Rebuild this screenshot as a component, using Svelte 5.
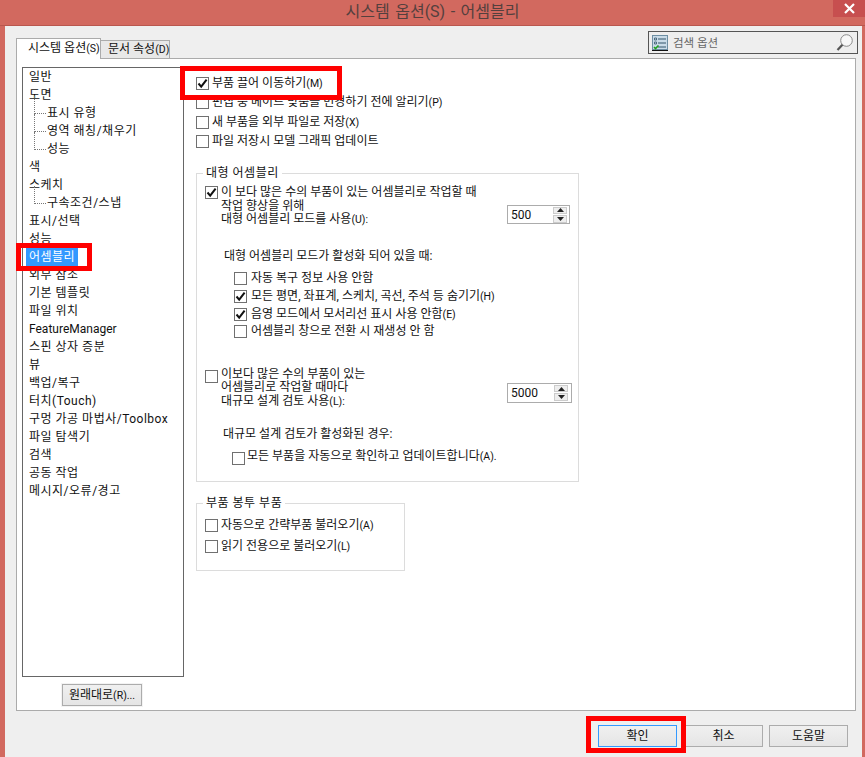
<script>
  const tree = [
    { t: '일반', l: 0 }, { t: '도면', l: 0 }, { t: '표시 유형', l: 1 }, { t: '영역 해칭/채우기', l: 1 }, { t: '성능', l: 1, end: true },
    { t: '색', l: 0 }, { t: '스케치', l: 0 }, { t: '구속조건/스냅', l: 1, end: true }, { t: '표시/선택', l: 0 }, { t: '성능', l: 0 },
    { t: '어셈블리', l: 0, sel: true }, { t: '외부 참조', l: 0 }, { t: '기본 템플릿', l: 0 }, { t: '파일 위치', l: 0 }, { t: 'FeatureManager', l: 0, lat: true },
    { t: '스핀 상자 증분', l: 0 }, { t: '뷰', l: 0 }, { t: '백업/복구', l: 0 }, { t: '터치(Touch)', l: 0 }, { t: '구멍 가공 마법사/Toolbox', l: 0 },
    { t: '파일 탐색기', l: 0 }, { t: '검색', l: 0 }, { t: '공동 작업', l: 0 }, { t: '메시지/오류/경고', l: 0 }
  ];
  const top = [
    { t: '부품 끌어 이동하기', k: '(M)', c: true },
    { t: '편집 중 메이트 맞춤을 변경하기 전에 알리기', k: '(P)' },
    { t: '새 부품을 외부 파일로 저장', k: '(X)' },
    { t: '파일 저장시 모델 그래픽 업데이트', k: '' }
  ];
  const large = [
    { t: '자동 복구 정보 사용 안함', k: '' },
    { t: '모든 평면, 좌표계, 스케치, 곡선, 주석 등 숨기기', k: '(H)', c: true },
    { t: '음영 모드에서 모서리선 표시 사용 안함', k: '(E)', c: true },
    { t: '어셈블리 창으로 전환 시 재생성 안 함', k: '' }
  ];
</script>

{#snippet box(c)}
  <span class="box">
    {#if c}
      <svg width="11" height="11" viewBox="0 0 11 11"><path d="M1.5 5.5 L4.2 8.6 L9.6 1.6" fill="none" stroke="#111" stroke-width="2"/></svg>
    {/if}
  </span>
{/snippet}

{#snippet spin(v, cls)}
  <div class="spin {cls}">
    <span class="val">{v}</span>
    <span class="arrows">
      <span class="ab"><svg width="7" height="4" viewBox="0 0 7 4"><path d="M3.5 0 L7 4 L0 4 Z" fill="#222"/></svg></span>
      <span class="ab"><svg width="7" height="4" viewBox="0 0 7 4"><path d="M0 0 L7 0 L3.5 4 Z" fill="#222"/></svg></span>
    </span>
  </div>
{/snippet}

<div class="win">
  <header class="title">
    <span class="ttext">시스템 옵션(S) - 어셈블리</span>
    <span class="close"><svg width="11" height="11" viewBox="0 0 11 11"><path d="M1 1 L10 10 M10 1 L1 10" stroke="#fff" stroke-width="2.2"/></svg></span>
  </header>
  <div class="dialog">
    <div class="tabbar">
      <div class="tabs">
        <div class="tab active">시스템 옵션<span class="ak">(S)</span></div>
        <div class="tab">문서 속성<span class="ak">(D)</span></div>
      </div>
      <div class="search">
        <svg class="sicon" width="16" height="16" viewBox="0 0 16 16">
          <rect x="0.5" y="0.5" width="15" height="14" fill="#c9dbe8" stroke="#6d8ea3"/>
          <rect x="0" y="15" width="16" height="1" fill="#111"/>
          <path d="M2.5 3h2v2h-2zM2.5 7h2v2h-2z" fill="none" stroke="#33546a" stroke-width="0.8"/>
          <path d="M6 4h8M6 8h8M6 12h8" stroke="#33546a"/>
          <path d="M2 12l1.5 1.5L6.5 10.5" fill="none" stroke="#1da11d" stroke-width="1.6"/>
        </svg>
        <span class="stext">검색 옵션</span>
        <svg class="glass" width="17" height="18" viewBox="0 0 17 18">
          <circle cx="10.5" cy="6.5" r="5.8" fill="#f8f8f8" stroke="#8a8a8a"/>
          <path d="M6.4 10.8 L1.5 16" stroke="#555" stroke-width="2.2"/>
        </svg>
      </div>
    </div>
    <div class="panel">
      <div class="left">
        <div class="tree">
          {#each tree as it}
            <div class="node" class:sub={it.l === 1}>
              {#if it.l === 1}<span class="dots" class:end={it.end}></span>{/if}
              <span class="ntext" class:sel={it.sel} class:lat={it.lat}>{it.t}</span>
            </div>
          {/each}
        </div>
        <button class="btn reset">원래대로<span class="ak">(R)...</span></button>
      </div>
      <div class="main">
        <div class="toplist">
          {#each top as r}
            <div class="row">{@render box(r.c)}<span>{r.t}<span class="ak">{r.k}</span></span></div>
          {/each}
        </div>

        <fieldset class="group big">
          <legend>대형 어셈블리</legend>
          <div class="opt">
            {@render box(true)}
            <div class="lines">
              <div>이 보다 많은 수의 부품이 있는 어셈블리로 작업할 때</div>
              <div>작업 향상을 위해</div>
              <div>대형 어셈블리 모드를 사용<span class="ak">(U):</span></div>
            </div>
            {@render spin('500', 'sp1')}
          </div>
          <div class="cap">대형 어셈블리 모드가 활성화 되어 있을 때:</div>
          <div class="sublist">
            {#each large as r}
              <div class="row sr">{@render box(r.c)}<span>{r.t}<span class="ak">{r.k}</span></span></div>
            {/each}
          </div>
          <div class="opt second">
            {@render box(false)}
            <div class="lines">
              <div>이보다 많은 수의 부품이 있는</div>
              <div>어셈블리로 작업할 때마다</div>
              <div>대규모 설계 검토 사용<span class="ak">(L):</span></div>
            </div>
            {@render spin('5000', 'sp2')}
          </div>
          <div class="cap cap2">대규모 설계 검토가 활성화된 경우:</div>
          <div class="row last">{@render box(false)}<span class="up">모든 부품을 자동으로 확인하고 업데이트합니다<span class="ak">(A).</span></span></div>
        </fieldset>

        <fieldset class="group small">
          <legend>부품 봉투 부품</legend>
          <div class="row s1">{@render box(false)}<span>자동으로 간략부품 불러오기<span class="ak">(A)</span></span></div>
          <div class="row s2">{@render box(false)}<span>읽기 전용으로 불러오기<span class="ak">(L)</span></span></div>
        </fieldset>
      </div>
    </div>
    <div class="footer">
      <button class="btn ok">확인</button>
      <button class="btn">취소</button>
      <button class="btn">도움말</button>
    </div>
  </div>
  <span class="mark m1"></span>
  <span class="mark m2"></span>
  <span class="mark m3"></span>
</div>

<style>
  :global(body) { margin: 0; background: #d2695f; }
  .win {
    position: relative; width: 865px; height: 757px; overflow: hidden; background: #d2695f;
    display: flex; flex-direction: column;
    font: 12px/14px Roboto, "Noto Sans CJK KR", sans-serif; color: #111;
  }
  .title {
    height: 26px; flex: none; box-sizing: border-box; display: flex; justify-content: center; align-items: center;
    position: relative; border-bottom: 1px solid #b9574e;
  }
  .ttext { font-size: 16px; color: #54403e; word-spacing: 1.5px; line-height: 22px; margin-top: -2px; }
  .close {
    position: absolute; left: 833px; top: 0; width: 32px; height: 17px; background: #c74f4f;
    display: flex; align-items: center; justify-content: center;
  }
  .dialog { flex: 1; margin: 0 3px 0 5px; background: #efefef; display: flex; flex-direction: column; padding: 0 6px 0 11px; min-height: 0; }
  .tabbar { height: 32px; flex: none; display: flex; justify-content: space-between; align-items: flex-end; }
  .tabs { display: flex; align-items: flex-end; }
  .tab {
    box-sizing: border-box; height: 18px; padding: 0 0 0 7px; width: 69px; border: 1px solid #ababab; border-bottom: 0; border-left: 0;
    background: #e8e8e8; white-space: nowrap; line-height: 17px;
  }
  .tab.active { height: 21px; width: 85px; background: #fff; border-left: 1px solid #ababab; padding-left: 11px; position: relative; top: 1px; z-index: 1; line-height: 18px; }
  .search {
    box-sizing: border-box; width: 210px; height: 23px; margin: 0 -2px 4px 0; border: 1px solid #555; background: #eee;
    display: flex; align-items: center; padding: 0 4px 0 3px; gap: 5px;
  }
  .stext { color: #666; font-size: 11.5px; flex: 1; }
  .panel { height: 653px; box-sizing: border-box; flex: none; background: #fff; border: 1px solid #ababab; display: flex; padding: 8px 0 0 5px; }
  .left { width: 162px; flex: none; display: flex; flex-direction: column; }
  .tree { box-sizing: border-box; width: 162px; height: 610px; border: 1px solid #666; padding: 0 0 0 6px; flex: none; letter-spacing: 0.5px; }
  .node { height: 18px; line-height: 18px; white-space: nowrap; display: flex; align-items: center; position: relative; }
  .node.sub { padding-left: 18px; }
  .dots { position: absolute; left: 5px; top: -8px; bottom: -8px; width: 12px; border-left: 1px dotted #777; }
  .dots::after { content: ""; position: absolute; left: 0; top: 17px; width: 11px; border-top: 1px dotted #777; }
  .dots.end { bottom: 8px; }
  .ntext { position: relative; }
  .ntext.lat { letter-spacing: 0; }
  .ntext.sel { background: #3399ff; color: #fff; padding: 0 3px; margin-left: -3px; }
  .btn {
    box-sizing: border-box; width: 80px; height: 22px; font: inherit; color: #111; padding: 0;
    border: 1px solid #acacac; background: linear-gradient(#f0f0f0, #e5e5e5);
  }
  .reset { margin: 7px 0 0 40px; outline: 1px solid #f3f3f3; }
  .main { flex: 1; padding-left: 12px; min-width: 0; }
  .toplist { padding: 6.5px 0 0 0; display: flex; flex-direction: column; }
  .row { display: flex; align-items: center; white-space: nowrap; }
  .toplist .row { height: 19.5px; gap: 3px; }
  .box {
    box-sizing: border-box; flex: none; width: 13px; height: 13px; border: 1px solid #707070; background: #fff;
    display: inline-flex; align-items: center; justify-content: center;
  }
  .ak { font-size: 10.5px; }
  fieldset.group { margin: 0; padding: 0; border: 1px solid #dcdcdc; box-sizing: border-box; position: relative; min-width: 0; }
  legend { margin-left: -2px; padding: 0 3px; line-height: 14px; font-size: 12px; letter-spacing: 0.5px; }
  .big { width: 383px; height: 316px; margin-top: 14.5px !important; padding: 0 0 0 8px !important; }
  .opt { display: flex; position: relative; gap: 3px; height: 39px; margin-top: 4px; }
  .lines { line-height: 13.5px; white-space: nowrap; flex: 1; padding-top: 2px; }
  .second .lines { padding-top: 0; }
  .opt > :global(.box) { margin-top: 2px; }
  .spin {
    box-sizing: border-box; position: absolute; left: 302px; top: 21px; width: 63px; height: 19px; border: 1px solid #acacac; background: #fff;
    display: flex; align-items: center; justify-content: space-between; padding: 0 2px 0 3px;
  }
  .spin.sp2 { top: 15px; width: 65px; height: 20px; padding-right: 3px; }
  .arrows { display: flex; flex-direction: column; gap: 1px; }
  .ab { width: 14px; height: 7.5px; background: #eee; border: 1px solid #ccc; box-sizing: border-box; display: flex; align-items: center; justify-content: center; }
  .cap { margin: 26px 0 0 19px; height: 14px; white-space: nowrap; }
  .sublist { margin: 7px 0 0 29px; }
  .sr { height: 17.7px; gap: 4px; }
  .second { margin-top: 27px; }
  .cap2 { margin: 20px 0 0 18px; }
  .last { margin: 9px 0 0 27px; gap: 2px; height: 18px; }
  .up { margin-bottom: 4px; }
  .small { width: 209px; height: 75px; margin-top: 14px !important; padding: 0 0 0 8px !important; }
  .s1 { margin-top: 4.6px; height: 21px; gap: 3px; }
  .s2 { height: 21px; gap: 3px; }
  .footer { display: flex; justify-content: flex-end; gap: 6px; margin-top: 14px; padding-right: 8px; }
  .footer .btn { width: 79px; height: 22px; }
  .footer .ok { border-color: #3399ff; margin-right: 1px; }
  .mark { position: absolute; border: 5px solid #f00; box-sizing: border-box; z-index: 5; }
  .m1 { left: 180px; top: 66px; width: 162px; height: 34px; }
  .m2 { left: 16px; top: 243px; width: 76px; height: 28px; }
  .m3 { left: 586px; top: 716px; width: 100px; height: 37px; }
</style>
